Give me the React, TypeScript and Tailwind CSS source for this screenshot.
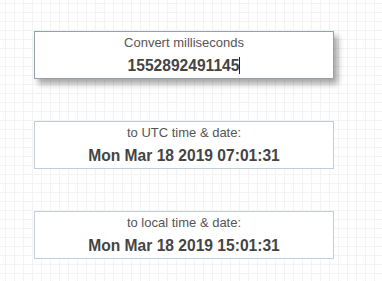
import React from 'react';

const ResultBox = ({ label, value }: { label: string; value: string }) => {
  return (
    <div className="w-[300px] h-[48px] border border-[#c3cdd5] bg-white pt-[3px] text-center">
      <div className="text-[13px] leading-[15px] text-[#555]">{label}</div>
      <div className="mt-[7px] text-[15.6px] leading-[18px] font-bold text-[#444]">{value}</div>
    </div>
  );
};

const App = () => {
  const ms = '1552892491145';

  return (
    <main
      className="h-[281px] w-full overflow-hidden bg-white bg-[linear-gradient(to_right,#f3f3f3_1px,transparent_1px),linear-gradient(to_bottom,#f3f3f3_1px,transparent_1px)] bg-[size:9px_9px] bg-[position:5px_3px] pl-[34px] pt-[31px]"
      style={{ fontFamily: '"Liberation Sans", Arial, sans-serif' }}
    >
      <div className="flex flex-col gap-[42px]">
        <div className="w-[300px] h-[48px] border border-[#8fa2ae] bg-white pt-[3px] text-center shadow-[4px_5px_6px_rgba(0,0,0,0.35)]">
          <div className="text-[13px] leading-[15px] text-[#555]">Convert milliseconds</div>
          <div className="mt-[7px] text-[15.6px] leading-[18px] font-bold text-[#444]">
            <span className="border-r border-[#222]">{ms}</span>
          </div>
        </div>

        <ResultBox label="to UTC time & date:" value="Mon Mar 18 2019 07:01:31" />
        <ResultBox label="to local time & date:" value="Mon Mar 18 2019 15:01:31" />
      </div>
    </main>
  );
};

export default App;
